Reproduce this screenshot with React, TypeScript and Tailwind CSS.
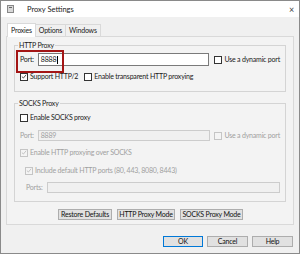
import React from "react";

function Check({ checked = false, disabled = false }: { checked?: boolean; disabled?: boolean }) {
  return (
    <span
      className={`inline-flex w-[8px] h-[8px] shrink-0 items-center justify-center border ${
        disabled ? "border-[#c5c5c5] bg-[#f4f4f4]" : "border-[#333] bg-white"
      }`}
    >
      {checked && (
        <svg width="7" height="7" viewBox="0 0 7 7">
          <path d="M1 3.6 L2.8 5.3 L6 1.5" fill="none" stroke={disabled ? "#b5b5b5" : "#222"} strokeWidth="0.9" />
        </svg>
      )}
    </span>
  );
}

function Btn({ children, w, primary = false }: { children: React.ReactNode; w: string; primary?: boolean }) {
  return (
    <div
      className={`${w} h-[11px] flex items-center justify-center whitespace-nowrap border ${
        primary ? "border-[#0078d7]" : "border-[#adadad]"
      } bg-[#e1e1e1] text-[#111]`}
    >
      {children}
    </div>
  );
}

export default function App() {
  return (
    <div className="w-[300px] h-[254px] border border-[#8a8a8a] bg-[#f0f0f0] flex flex-col text-[7px] leading-[9px] tracking-[-0.2px] text-[#1a1a1a] font-['Lato',sans-serif] whitespace-nowrap overflow-hidden">
      {/* Title bar */}
      <div className="h-[16px] bg-white flex items-center pl-[6px] pr-[5px] shrink-0">
        <svg width="7" height="8" viewBox="0 0 7 8" className="mr-[13px]">
          <rect x="0.5" y="0.5" width="6" height="7" fill="#d8d8d8" stroke="#888" strokeWidth="1" />
          <rect x="2" y="2" width="3" height="1" fill="#666" />
        </svg>
        <span className="text-[7.5px] tracking-normal text-[#222]">Proxy Settings</span>
        <span className="ml-auto text-[9px] text-[#444] leading-none">×</span>
      </div>
      {/* Tabs */}
      <div className="flex items-end ml-[6px] mt-[6px] h-[13px] shrink-0 relative z-10">
        <div className="h-[14px] px-[3px] flex items-center bg-white border border-[#d9d9d9] border-b-0 -mb-px">Proxies</div>
        <div className="h-[12px] px-[3px] flex items-center border border-[#d9d9d9] border-b-0 border-l-0">Options</div>
        <div className="h-[12px] px-[3px] flex items-center border border-[#d9d9d9] border-b-0 border-l-0">Windows</div>
      </div>
      {/* Panel */}
      <div className="mx-[5px] border border-[#d9d9d9] bg-[#f3f3f3] h-[189px] flex flex-col px-[7px] pt-[8px] shrink-0">
        {/* HTTP group */}
        <div className="relative border border-[#d4d4d4] h-[47px] px-[5px] pt-[7px] flex flex-col">
          <span className="absolute -top-[5px] left-[3px] px-[1px] bg-[#f3f3f3]">HTTP Proxy</span>
          <div className="flex items-center h-[13px]">
            <span className="w-[18px]">Port:</span>
            <div className="w-[173px] h-[13px] border border-[#7a7a7a] bg-white flex items-center pl-[2px]">8888<span className="w-px h-[8px] bg-black ml-px" /></div>
            <div className="flex items-center ml-[5px] gap-[2px]"><Check /><span>Use a dynamic port</span></div>
          </div>
          <div className="flex items-center mt-[6px] gap-[2px]">
            <Check checked /><span>Support HTTP/2</span>
            <span className="w-[2px]" />
            <Check /><span>Enable transparent HTTP proxying</span>
          </div>
          <div className="absolute left-[1px] top-[4px] w-[48px] h-[23px] border-2 border-[#a31515]" />
        </div>
        {/* SOCKS group */}
        <div className="relative border border-[#d4d4d4] h-[99px] mt-[11px] px-[5px] pt-[9px] flex flex-col">
          <span className="absolute -top-[5px] left-[3px] px-[1px] bg-[#f3f3f3]">SOCKS Proxy</span>
          <div className="flex items-center gap-[2px]"><Check /><span>Enable SOCKS proxy</span></div>
          <div className="flex items-center h-[11px] mt-[8px] text-[#a0a0a0]">
            <span className="w-[18px]">Port:</span>
            <div className="w-[175px] h-[11px] border border-[#cccccc] bg-[#f0f0f0] flex items-center pl-[2px]">8889</div>
            <div className="flex items-center ml-[4px] gap-[2px]"><Check disabled /><span>Use a dynamic port</span></div>
          </div>
          <div className="flex items-center mt-[7px] gap-[2px] text-[#a0a0a0]"><Check checked disabled /><span>Enable HTTP proxying over SOCKS</span></div>
          <div className="flex items-center mt-[9px] ml-[5px] gap-[2px] text-[#a0a0a0]"><Check checked disabled /><span>Include default HTTP ports (80, 443, 8080, 8443)</span></div>
          <div className="flex items-center mt-[7px] ml-[6px] text-[#a0a0a0]">
            <span className="mr-[4px]">Ports:</span>
            <div className="flex-1 h-[11px] border border-[#cccccc] bg-[#f0f0f0]" />
          </div>
        </div>
        <div className="flex justify-center gap-[5px] mt-[7px] pl-[1px]">
          <Btn w="w-[54px]">Restore Defaults</Btn>
          <Btn w="w-[58px]">HTTP Proxy Mode</Btn>
          <Btn w="w-[63px]">SOCKS Proxy Mode</Btn>
        </div>
      </div>
      {/* Bottom buttons */}
      <div className="flex justify-end gap-[4px] mr-[6px] mt-[11px]">
        <Btn w="w-[40px]" primary>OK</Btn>
        <Btn w="w-[41px]">Cancel</Btn>
        <Btn w="w-[41px]">Help</Btn>
      </div>
    </div>
  );
}
